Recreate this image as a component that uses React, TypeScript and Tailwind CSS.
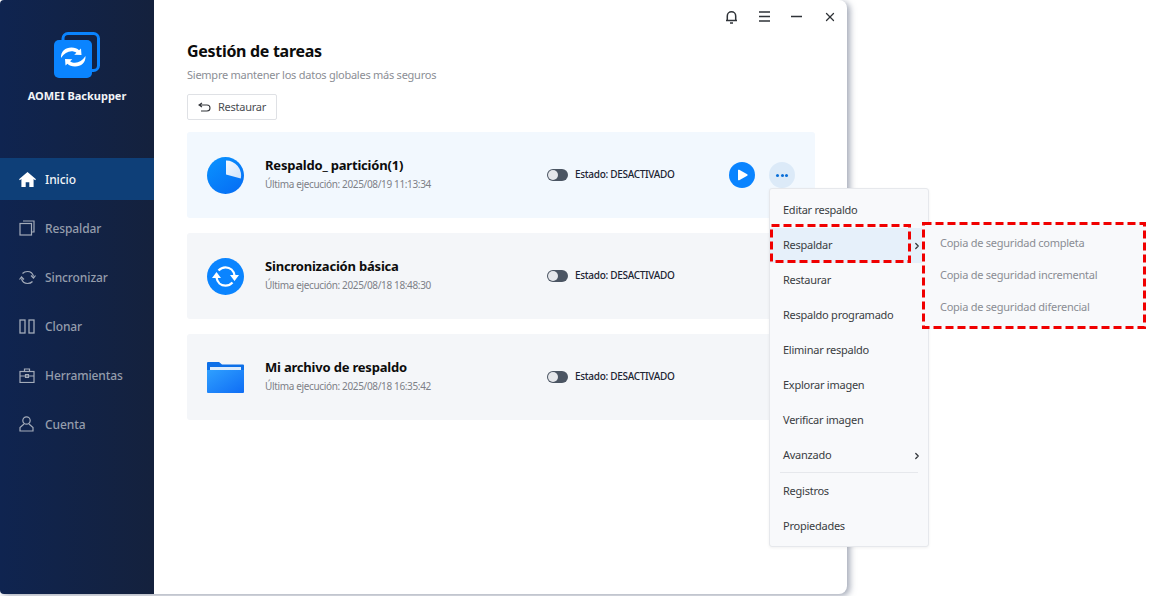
import { ChevronRight, X } from "lucide-react";

const FONT = "font-['Noto_Sans','Open_Sans',sans-serif]";

const Logo = () => (
	<svg width="47" height="47" viewBox="0 0 47 47" fill="none">
		<rect x="9" y="1.500" width="35.500" height="37" rx="5" stroke="#0a84ff" strokeWidth="3" />
		<rect x="0" y="8" width="38" height="38" rx="5" fill="#0a84ff" />
		<path d="M7 26c-.4-6.500 4.300-10.500 10.500-10.500 3.300 0 5.800 1 7.500 2.700l2-1.700.5 6.500-7.300-.2 2.200-2c-1.400-1-3-1.500-4.900-1.500-4 0-7.500 2.300-10.500 6.700Z" fill="#fff" />
		<path d="M31.500 24c.4 6.500-4.300 10.500-10.500 10.500-3.300 0-5.800-1-7.500-2.700l-2 1.700-.5-6.500 7.300.2-2.200 2c1.400 1 3 1.500 4.900 1.500 4 0 7.500-2.300 10.500-6.700Z" fill="#fff" />
	</svg>
);

const HomeIcon = () => (
	<svg width="17" height="15" viewBox="0 0 17 15" fill="#fff">
		<path d="M8.500 0 0 7.200l.9 1L2.400 7v8h4.300v-4.700h3.600V15h4.300V7l1.500 1.200.9-1z" />
	</svg>
);

const CopyIcon = () => (
	<svg width="16" height="16" viewBox="0 0 16 16" fill="none" stroke="#a3abb9" strokeWidth="1.200">
		<rect x="1" y="3.500" width="11.500" height="11.500" />
		<path d="M4 1h11v11h-2.500" />
	</svg>
);

const SyncIcon = () => (
	<svg width="17" height="15" viewBox="0 0 17 15" fill="none" stroke="#a3abb9" strokeWidth="1.200">
		<path d="M3.500 3.500C4.700 2.200 6.400 1.500 8.500 1.500c3 0 5.300 2 6 5" />
		<path d="M13.500 11.500c-1.200 1.300-2.900 2-5 2-3 0-5.300-2-6-5" />
		<path d="M12 5.500l2.500 2.500 2-2.500M5 9.500 2.500 7l-2 2.500" />
	</svg>
);

const CloneIcon = () => (
	<svg width="16" height="15" viewBox="0 0 16 15" fill="none" stroke="#a3abb9" strokeWidth="1.300">
		<rect x="1" y="1" width="5" height="13" />
		<rect x="10" y="1" width="5" height="13" />
	</svg>
);

const ToolsIcon = () => (
	<svg width="16" height="15" viewBox="0 0 16 15" fill="none" stroke="#a3abb9" strokeWidth="1.200">
		<rect x="1" y="3.500" width="14" height="11" />
		<path d="M5.500 3.500V1h5v2.500M1 8h14M6.500 6.500h3v3h-3z" />
	</svg>
);

const UserIcon = () => (
	<svg width="15" height="16" viewBox="0 0 15 16" fill="none" stroke="#a3abb9" strokeWidth="1.200">
		<circle cx="7.500" cy="4.500" r="3.700" />
		<path d="M5 8 1 11.500V15h13v-3.500L10 8" />
	</svg>
);

const PieIcon = () => (
	<svg width="37" height="37" viewBox="0 0 37 37">
		<defs>
			<linearGradient id="pie" x1="0" y1="0" x2="0.7" y2="1">
				<stop offset="0" stopColor="#0a94ff" />
				<stop offset="1" stopColor="#0670f5" />
			</linearGradient>
			<linearGradient id="slice" x1="0" y1="0" x2="1" y2="1">
				<stop offset="0" stopColor="#f4f9ff" />
				<stop offset="1" stopColor="#cfe3fb" />
			</linearGradient>
		</defs>
		<circle cx="18.500" cy="18.500" r="18.500" fill="url(#pie)" />
		<path d="M19 3.500A15 15 0 0 1 33.800 21.500L19 17.500Z" fill="url(#slice)" />
	</svg>
);

const CycleIcon = () => (
	<svg width="37" height="37" viewBox="0 0 37 37" fill="none">
		<circle cx="18.500" cy="18.500" r="18.500" fill="#0a84ff" />
		<path d="M11.500 12.500c1.800-2 4.300-3.200 7-3.200 4.700 0 8.300 3.300 9 8.200" stroke="#fff" strokeWidth="2.200" />
		<path d="M25.500 24.500c-1.800 2-4.300 3.200-7 3.200-4.700 0-8.300-3.300-9-8.200" stroke="#fff" strokeWidth="2.200" />
		<path d="M23 17h9l-4.500 6zM5 20h9l-4.500-6z" fill="#fff" />
	</svg>
);

const FolderIcon = () => (
	<svg width="37" height="31" viewBox="0 0 37 31">
		<defs>
			<linearGradient id="folder" x1="0" y1="0" x2="1" y2="1">
				<stop offset="0" stopColor="#2fa0ff" />
				<stop offset="1" stopColor="#0f6df5" />
			</linearGradient>
		</defs>
		<path d="M0 1a1 1 0 0 1 1-1h11l3 2.500h21a1 1 0 0 1 1 1V10H0z" fill="#0c6fe8" />
		<rect x="3" y="5" width="31" height="3" fill="#dcebfb" />
		<path d="M0 8h37v22a1 1 0 0 1-1 1H1a1 1 0 0 1-1-1z" fill="url(#folder)" />
	</svg>
);

// red annotation boxes drawn on top of the screenshot
const DashedBox = ({ className, width, height }: { className: string; width: number; height: number }) => (
	<svg className={className} width={width} height={height} fill="none">
		<rect x="1.500" y="1.500" width={width - 3} height={height - 3} stroke="#f00000" strokeWidth="3" strokeDasharray="8 4" />
	</svg>
);

const navItems = [
	{ label: "Inicio", icon: <HomeIcon />, active: true },
	{ label: "Respaldar", icon: <CopyIcon /> },
	{ label: "Sincronizar", icon: <SyncIcon /> },
	{ label: "Clonar", icon: <CloneIcon /> },
	{ label: "Herramientas", icon: <ToolsIcon /> },
	{ label: "Cuenta", icon: <UserIcon /> },
];

const tasks = [
	{ name: "Respaldo_ partición(1)", date: "2025/08/19 11:13:34", icon: <PieIcon />, active: true },
	{ name: "Sincronización básica", date: "2025/08/18 18:48:30", icon: <CycleIcon /> },
	{ name: "Mi archivo de respaldo", date: "2025/08/18 16:35:42", icon: <FolderIcon /> },
];

const menuTop = ["Editar respaldo", "Respaldar", "Restaurar", "Respaldo programado", "Eliminar respaldo", "Explorar imagen", "Verificar imagen", "Avanzado"];

const subItems = ["Copia de seguridad completa", "Copia de seguridad incremental", "Copia de seguridad diferencial"];

const Sidebar = () => (
	<aside className="w-[154px] shrink-0 bg-gradient-to-r from-[#0f2450] to-[#14213d] flex flex-col">
		<div className="flex flex-col items-center pt-[32px] h-[158px]">
			<Logo />
			<p className="mt-[9px] text-[11px] leading-[16px] font-bold text-[#f2f4f7]">AOMEI Backupper</p>
		</div>
		<nav className="flex flex-col gap-[7px]">
			{navItems.map((item) => (
				<div
					key={item.label}
					className={`h-[42px] flex items-center pl-[19px] ${item.active ? "bg-[#0e3f78]" : ""}`}
				>
					<span className="w-[26px] flex">{item.icon}</span>
					<span className={`pt-[1px] text-[12px] tracking-[-0.1px] font-medium ${item.active ? "text-[#f2f4f7]" : "text-[#959dac]"}`}>
						{item.label}
					</span>
				</div>
			))}
		</nav>
	</aside>
);

const TaskCard = ({ task }: { task: (typeof tasks)[number] }) => (
	<div className={`h-[86px] rounded-[3px] flex items-center pl-[19px] ${task.active ? "bg-[#f2f8fe]" : "bg-[#f4f6f9]"}`}>
		<div className="w-[38px] flex justify-center">{task.icon}</div>
		<div className="w-[303px] pl-[21px] -mt-[3px]">
			<p className="text-[13px] leading-[18px] tracking-[-0.2px] font-bold text-[#0c0c0c]">{task.name}</p>
			<p className="mt-[3px] text-[10px] leading-[15px] tracking-[-0.35px] text-[#7d8087]">Última ejecución: {task.date}</p>
		</div>
		<div className="flex items-center -mt-[1px]">
			<div className="w-[21px] h-[12px] rounded-full bg-[#4b5563] relative">
				<span className="absolute left-[1px] top-[1px] w-[10px] h-[10px] rounded-full bg-[#e5e7eb]" />
			</div>
			<span className="ml-[7px] text-[10px] tracking-[-0.3px] font-medium text-[#1c2433]">Estado: DESACTIVADO</span>
		</div>
		{task.active && (
			<div className="ml-auto mr-[20px] flex items-center gap-[14px]">
				<div className="w-[26px] h-[26px] rounded-full bg-[#0a84ff] flex items-center justify-center">
					<svg width="11" height="12" viewBox="0 0 11 12" fill="#fff">
						<path d="M1 1.500v9a.8.8 0 0 0 1.200.7l8-4.500a.8.8 0 0 0 0-1.400l-8-4.500A.8.8 0 0 0 1 1.500Z" />
					</svg>
				</div>
				<div className="w-[26px] h-[26px] rounded-full bg-[#dceaf8] flex items-center justify-center gap-[1.500px]">
					<span className="w-[3px] h-[3px] rounded-full bg-[#0a6fd8]" />
					<span className="w-[3px] h-[3px] rounded-full bg-[#0a6fd8]" />
					<span className="w-[3px] h-[3px] rounded-full bg-[#0a6fd8]" />
				</div>
			</div>
		)}
	</div>
);

const App = () => {
	return (
		<div className={`relative w-[1151px] h-[596px] overflow-hidden bg-white ${FONT}`}>
			<div className="w-[847px] h-[594px] flex rounded-r-[8px] rounded-l-[4px] overflow-hidden bg-white shadow-[3px_2px_6px_rgba(90,100,125,0.55)]">
				<Sidebar />
				<main className="flex-1 flex flex-col pl-[33px] pr-[32px]">
					<div className="h-[33px] -mr-[32px] flex items-center justify-end gap-[21px] pr-[10px] text-[#2f3338]">
						<svg width="13" height="14" viewBox="0 0 13 14" fill="none" stroke="currentColor" strokeWidth="1.500">
							<path d="M1 10.500h11M2.300 10.500V6a4.200 4.200 0 0 1 8.400 0v4.500" />
							<path d="M5 13h3" />
						</svg>
						<svg width="11" height="11" viewBox="0 0 11 11" stroke="currentColor" strokeWidth="1.500">
							<path d="M0 1h11M0 5.500h11M0 10h11" />
						</svg>
						<svg width="11" height="11" viewBox="0 0 11 11" stroke="currentColor" strokeWidth="1.500">
							<path d="M0 5.500h11" />
						</svg>
						<X size={14} strokeWidth={2.200} />
					</div>
					<h1 className="mt-[6px] text-[16px] leading-[24px] tracking-[-0.3px] font-bold text-[#0c0c0c]">Gestión de tareas</h1>
					<p className="mt-[4px] text-[11px] leading-[16px] tracking-[-0.25px] text-[#8b8e95]">Siempre mantener los datos globales más seguros</p>
					<button className="mt-[11px] w-[90px] h-[26px] rounded-[2px] border border-[#dfe1e5] bg-white flex items-center justify-center gap-[7px] text-[11px] tracking-[-0.25px] text-[#4a4d52]">
						<svg width="13" height="10" viewBox="0 0 13 10" fill="none" stroke="#33363b" strokeWidth="1.100">
							<path d="M4 1 1 3l3 2M1 3h8a3 3 0 0 1 0 6H3" />
						</svg>
						Restaurar
					</button>
					<div className="mt-[12px] flex flex-col gap-[15px]">
						{tasks.map((task) => (
							<TaskCard key={task.name} task={task} />
						))}
					</div>
				</main>
			</div>

			{/* context menu */}
			<div className="absolute left-[769px] top-[188px] w-[160px] h-[359px] rounded-[3px] border border-[#e6e8ec] bg-[#f8f9fb] pt-[4px] text-[11px] tracking-[-0.25px] text-[#3a3d42] shadow-[0_1px_3px_rgba(0,0,0,0.06)]">
				{menuTop.map((label) => (
					<div
						key={label}
						className={`h-[35px] flex items-center justify-between pl-[13px] pr-[6px] ${label === "Respaldar" ? "bg-[#e6f0fa]" : ""}`}
					>
						{label}
						{(label === "Respaldar" || label === "Avanzado") && (
							<ChevronRight size={10} strokeWidth={3} className="text-[#33363b]" />
						)}
					</div>
				))}
				<div className="mx-[10px] -mt-[1px] mb-[1px] border-t border-[#e6e8ec]" />
				{["Registros", "Propiedades"].map((label) => (
					<div key={label} className="h-[35px] flex items-center pl-[13px]">
						{label}
					</div>
				))}
			</div>

			{/* submenu */}
			<div className="absolute left-[922px] top-[222px] w-[224px] h-[107px] p-[3px] pl-[18px] bg-[#f8f9fb] text-[11px] tracking-[-0.25px] text-[#8a8d94]">
				<div className="pt-[2px]">
					{subItems.map((label) => (
						<div key={label} className="h-[32px] flex items-center">
							{label}
						</div>
					))}
				</div>
			</div>
			<DashedBox className="absolute left-[922px] top-[222px]" width={224} height={107} />
			<DashedBox className="absolute left-[770px] top-[224px]" width={141} height={39} />
		</div>
	);
};

export default App;
